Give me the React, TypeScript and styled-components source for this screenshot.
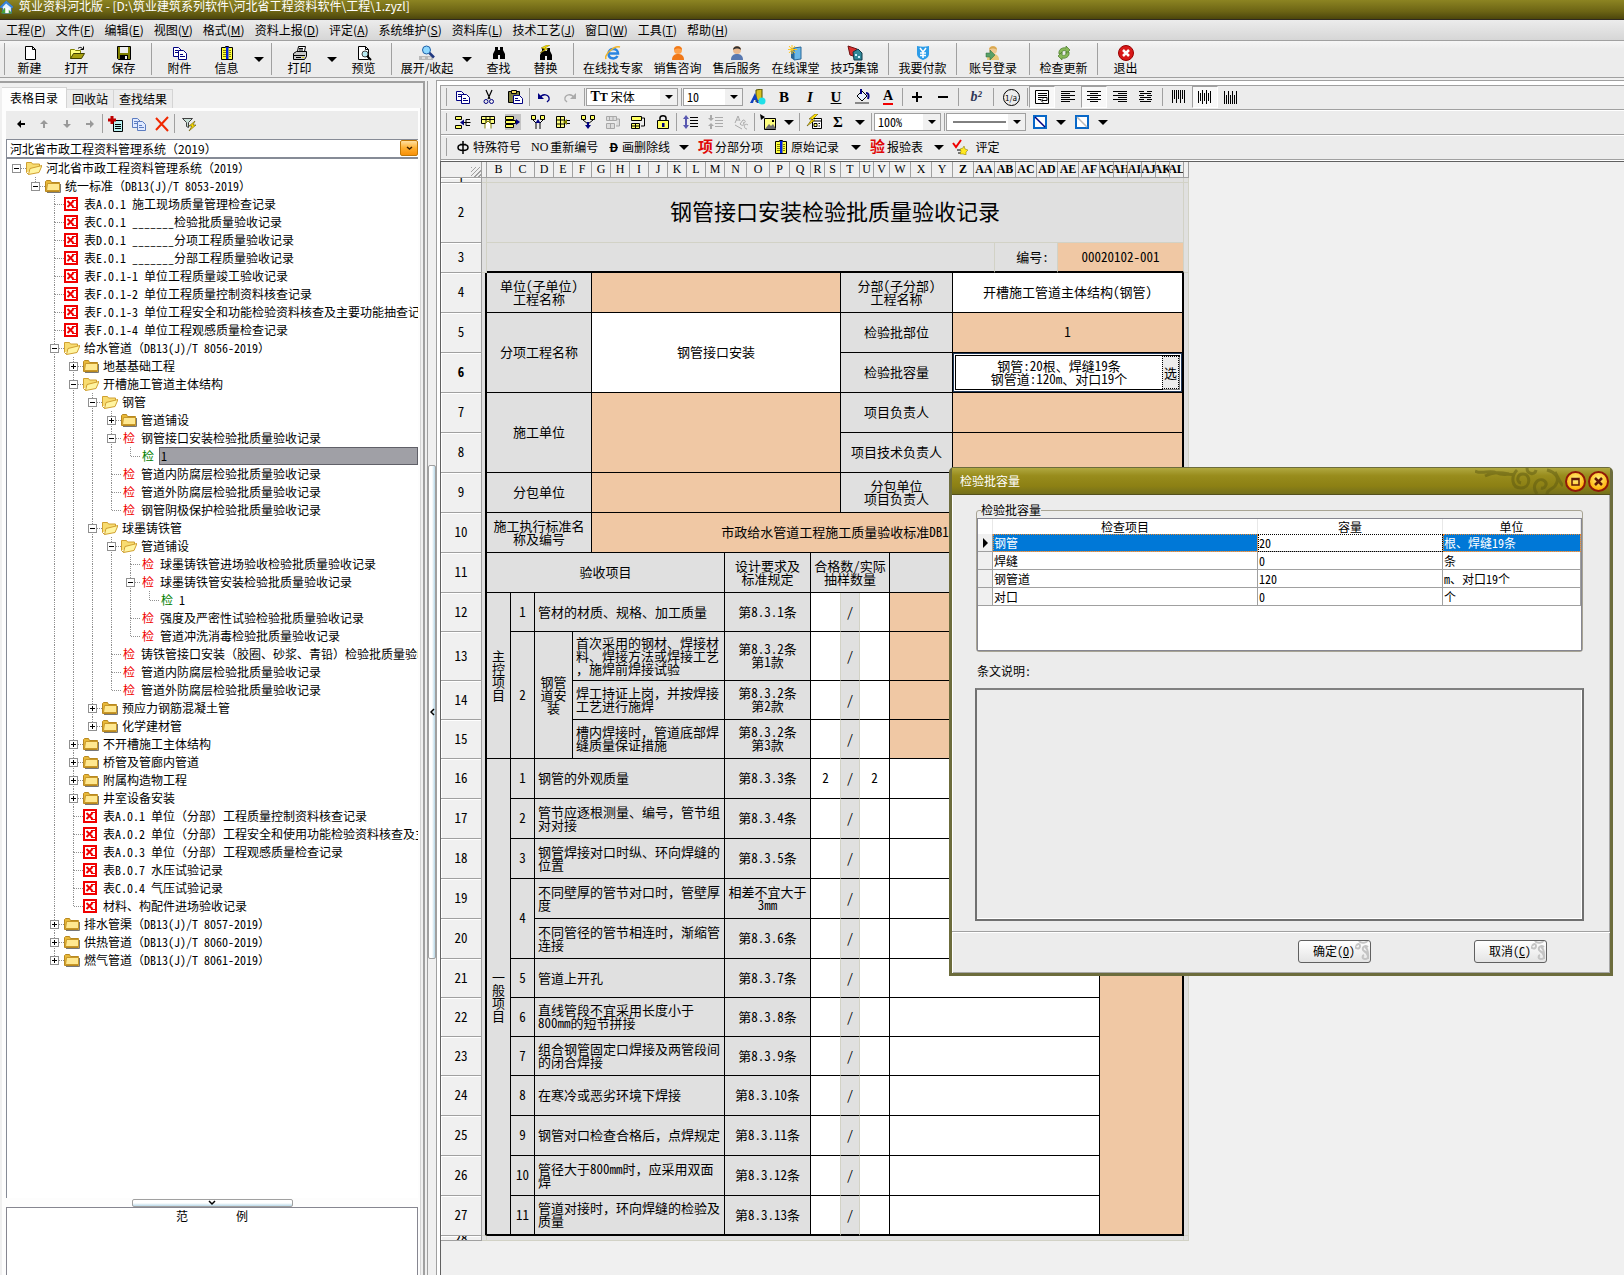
import React from "react";
import styled, { createGlobalStyle, css } from "styled-components";

const GlobalStyle = createGlobalStyle`
  *, *::before, *::after { box-sizing: border-box; }
  html, body { margin: 0; padding: 0; }
  body {
    background: #f0f0f0;
    color: #000;
    font: 12px/18px "Noto Sans CJK SC", sans-serif;
    text-spacing-trim: space-all;
    overflow: hidden;
  }
  button, select, input, textarea { font: inherit; color: inherit; margin: 0; }
  ul { margin: 0; padding: 0; list-style: none; }
`;

/* Latin runs take half-width glyphs, Chinese punctuation stays full width. */
const Half = styled.span`
  font-feature-settings: "hwid";
`;
const mix = (node: React.ReactNode): React.ReactNode =>
  typeof node === "string"
    ? node.split(/([ -~]+)/).map((part, i) => (i % 2 ? <Half key={i}>{part}</Half> : part))
    : node;

/* ---------- icons ---------- */

const docs = (c: string, fill = "#fff") => (
  <>
    <path d="M1.5 2.5h5l3 3v6h-8z" fill={fill} stroke={c} />
    <path d="M3 5.5h3M3 7.5h4" stroke={c} />
    <path d="M6.5 5.5h5l3 3v6h-8z" fill={fill} stroke={c} />
    <path d="M8 9.5h3M8 11.5h5" stroke={c} />
  </>
);
const bars = (ls: [number, number][]) => (
  <path d={ls.map(([a, b], i) => `M${a} ${2.5 + i * 2}H${b}`).join("")} stroke="#000" />
);
const vbars = (ls: [number, number][]) => (
  <path d={ls.map(([a, b], i) => `M${1.5 + i * 2} ${a}V${b}`).join("")} stroke="#000" />
);
const binoculars = (y: number) => (
  <path transform={`translate(0 ${y})`} d="M4 2h3v3h2V2h3v3l2 4v5H9v-4H7v4H2V9l2-4z" fill="#000" />
);
const person = (body: string, head: string, hair: string) => (
  <>
    <path d="M2 15c0-5 3-6 6-6s6 1 6 6z" fill={body} />
    <circle cx="8" cy="5" r="4" fill={head} />
    <path d="M4 5c0-5 8-5 8 0-2-2-6-2-8 0z" fill={hair} />
  </>
);

const ICONS: Record<string, React.ReactNode> = {
  app: (
    <>
      <path d="M0 8L7 1l8 7-2 1v6H3V9z" fill="#e8f4ff" stroke="#2a6ab8" />
      <path d="M0 8L7 1l8 7-2 1-6-5-5 5z" fill="#3a86d8" />
      <path d="M1 15l4-6 5 2 4 4z" fill="#47a23c" />
      <path d="M6 9h4v6H6z" fill="#fff" />
    </>
  ),
  new: <path d="M3.5 1.5h7l3 3v10h-10zM10.5 1.5v3h3" fill="#fff" stroke="#000" />,
  open: (
    <>
      <path d="M1.5 13.5v-9h4l1 1h5v3" fill="#ffff80" stroke="#808000" />
      <path d="M1.5 13.5l3-5h11l-3 5z" fill="#a8a010" stroke="#404000" />
      <path d="M9 3.5c2-2 4-1 5 1M14.5 1.5v3h-3" fill="none" stroke="#000" />
    </>
  ),
  save: (
    <>
      <path d="M1.5 1.5h13v13h-12l-1-1z" fill="#808000" stroke="#000" />
      <path d="M4 2h8v6H4z" fill="#eee" />
      <path d="M4 10h8v4H4z" fill="#000" />
      <path d="M9 11h2v3H9z" fill="#eee" />
    </>
  ),
  docs: docs("#000080"),
  docsPale: docs("#5c7cc0", "#dfe9ff"),
  info: (
    <>
      <path d="M2.5 2.5h4v-1h3v1h4v12h-11z" fill="#ffff40" stroke="#000" />
      <path d="M4 5.5h3M4 7.5h3M4 9.5h3M4 11.5h3M10 5.5h2M10 7.5h2M10 9.5h2M10 11.5h2" stroke="#808000" />
      <path d="M7 2h2.5v12H7z" fill="#0020e0" />
    </>
  ),
  print: (
    <>
      <path d="M5.5 6.5l1-5h7l-1 5z" fill="#fff" stroke="#000" />
      <path d="M1.5 8.5l3-2h10v5l-2 3h-11z" fill="#c8c8c8" stroke="#000" />
      <path d="M2 10.5h11M7 3.5h4M7 5h4M4 12.5h5" stroke="#000" />
      <path d="M10 12h2v1h-2z" fill="#e0d000" />
    </>
  ),
  preview: (
    <>
      <path d="M2.5 1.5h7l3 3v10h-10zM9.5 1.5v3h3" fill="#fff" stroke="#000" />
      <circle cx="9" cy="9" r="3" fill="#b8ecf4" stroke="#404040" />
      <path d="M11 11l4 4" stroke="#000" strokeWidth="2" />
    </>
  ),
  expand: (
    <>
      <path d="M0 11h14v4H0z" fill="#b8b8b8" />
      <path d="M3 13h3M9 13h3" stroke="#fff" />
      <circle cx="7.5" cy="5" r="4" fill="#8ed8ff" stroke="#2060a8" />
      <path d="M10.500 8l4.500 4.500" stroke="#203880" strokeWidth="2.500" />
    </>
  ),
  find: binoculars(0),
  replace: (
    <>
      {binoculars(1)}
      <path d="M9 0L3 3l4 1-5 4 8-4-3-1 5-3z" fill="#ffe800" stroke="#807000" strokeWidth=".5" />
    </>
  ),
  ie: (
    <>
      <path d="M3.5 8.5H13c0-6-9.500-6-9.500 0s7 6 9 2.500" fill="none" stroke="#2a84e0" strokeWidth="2.500" />
      <path d="M1 14c-2-4 8-14 14-12" fill="none" stroke="#f0b428" strokeWidth="1.500" />
    </>
  ),
  sales: person("#f07818", "#ffa048", "#f07818"),
  service: person("#5878b0", "#e8b890", "#303030"),
  classroom: (
    <>
      <path d="M6 3l7-1v12l-7 1z" fill="#6ab8e8" stroke="#2a6898" />
      <path d="M3 3l3 0v12l-3-2z" fill="#2a6898" />
      <path d="M4 0v9M0 4.500h9M1 1l6 7M7 1L1 8" stroke="#ffc820" />
    </>
  ),
  tips: (
    <>
      <path d="M1 1l9 3 2 9-9-3z" fill="#d83030" stroke="#701010" />
      <path d="M6 7l5-3 4 4v7H7z" fill="#308898" stroke="#103848" />
      <path d="M8 9h2v2H8zM11 11h2v2h-2z" fill="#c8f0ff" />
    </>
  ),
  pay: (
    <>
      <path d="M2 1c4 1 8 1 12 0v8c0 3-3 5-6 6-3-1-6-3-6-6z" fill="#2c9ce8" />
      <path d="M5 3l3 4 3-4M8 7v6M5 8h6M5 10.500h6" fill="none" stroke="#fff" strokeWidth="1.500" />
    </>
  ),
  login: (
    <>
      {person("#e8c878", "#f0c890", "#d8a850")}
      <path d="M1 8h4V5l5 5-5 5v-3H1z" fill="#58a068" stroke="#286838" strokeWidth=".5" />
    </>
  ),
  update: (
    <>
      <path d="M3 9c-1-5 4-7 7-6V1l4 4-4 4V6C8 5 5 6 6 9z" fill="#88b858" stroke="#487828" strokeWidth=".7" />
      <path d="M13 7c1 5-4 7-7 6v2l-4-4 4-4v3c2 1 5 0 4-3z" fill="#88b858" stroke="#487828" strokeWidth=".7" />
    </>
  ),
  exit: (
    <>
      <circle cx="8" cy="8" r="7.500" fill="#d81818" stroke="#900" />
      <path d="M5 5l6 6M11 5l-6 6" stroke="#fff" strokeWidth="2.500" />
    </>
  ),
  left: <path d="M4 8l4-4v3h4v2H8v3z" fill="#000" />,
  up: <path d="M8 4l4 4H9v4H7V8H4z" fill="#999" />,
  down: <path d="M8 12l4-4H9V4H7v4H4z" fill="#999" />,
  right: <path d="M12 8L8 4v3H4v2h4v3z" fill="#999" />,
  add: (
    <>
      <path d="M5.500 4.500h9v11h-9z" fill="#b8f0f0" stroke="#000" />
      <path d="M7 8.500h6M7 10.500h6M7 12.500h6" stroke="#000" />
      <path d="M0 4h8M4 0v8" stroke="#c00000" strokeWidth="3" />
    </>
  ),
  remove: <path d="M2 2l12 13M14 1L2 14" stroke="#f02800" strokeWidth="2" />,
  filter: (
    <>
      <path d="M1.500 2.500h10l-4 4v5l-2-1v-4z" fill="#c8e0d8" stroke="#404040" />
      <path d="M14 5l-6 5h3l-3 5 7-6h-3z" fill="#ffe000" stroke="#605000" strokeWidth=".6" />
    </>
  ),
  cut: (
    <>
      <path d="M5 1l4 9M11 1L7 10" stroke="#000" strokeWidth="1.200" />
      <circle cx="5" cy="12.500" r="2" fill="none" stroke="#000080" />
      <circle cx="10.500" cy="12.500" r="2" fill="none" stroke="#000080" />
    </>
  ),
  paste: (
    <>
      <path d="M1.500 2.500h11v11h-11z" fill="#808040" stroke="#000" />
      <path d="M4.500 1.500h5v3h-5z" fill="#ffe060" stroke="#000" />
      <path d="M6.500 6.500h6l3 3v5h-9z" fill="#fff" stroke="#000080" />
      <path d="M8 9.500h3M8 11.500h5" stroke="#000080" />
    </>
  ),
  undo: (
    <>
      <path d="M4 9c2-5 10-4 9 2l-2 2" fill="none" stroke="#000080" strokeWidth="1.300" />
      <path d="M2 4v6h6z" fill="#000080" />
    </>
  ),
  redo: (
    <>
      <path d="M12 9C10 4 2 5 3 11l2 2" fill="none" stroke="#aaa" strokeWidth="1.300" />
      <path d="M14 4v6H8z" fill="#aaa" />
    </>
  ),
  format: (
    <>
      <path d="M6 1l6-1v10l-6 3z" fill="#d8c020" stroke="#505000" />
      <path d="M0 14L5 4l4 10H7l-1-3H4l-1 3z" fill="#1040c0" />
      <circle cx="12" cy="12" r="3.500" fill="#20e0e8" />
    </>
  ),
  bucket: (
    <>
      <path d="M3 7l5-5 5 5-5 5z" fill="#e8f0ff" stroke="#000" />
      <path d="M7 0v5M12 4c3 0 3 3 2 6" fill="none" stroke="#000080" strokeWidth="2" />
      <path d="M1 13h14v2H1z" fill="#888" />
    </>
  ),
  plus: <path d="M3 8h10M8 3v10" stroke="#000" strokeWidth="2" />,
  minus: <path d="M3 8h10" stroke="#000" strokeWidth="2" />,
  wrap: (
    <>
      <path d="M1.500 1.500h13v13h-13z" fill="#fff" stroke="#000" />
      <path d="M4 4.500h9M4 6.500h9M4 8.500h9v3H8M4 10.500h3M9 9.500l-2 2 2 2" fill="none" stroke="#000" />
    </>
  ),
  alignLeft: bars([[1, 15], [1, 10], [1, 15], [1, 10], [1, 15], [1, 10]]),
  alignCenter: bars([[1, 15], [4, 12], [1, 15], [4, 12], [1, 15], [4, 12]]),
  alignRight: bars([[1, 15], [6, 15], [1, 15], [6, 15], [1, 15], [6, 15]]),
  alignFill: <path d="M1 2.500h5M9 2.500h5M2 4.500h11M1 6.500h5M9 6.500h5M2 8.500h11M1 10.500h5M9 10.500h5M2 12.500h11" stroke="#000" />,
  vTop: vbars([[1, 14], [1, 10], [1, 14], [1, 10], [1, 14], [1, 10], [1, 14]]),
  vMid: vbars([[2, 14], [4, 12], [1, 15], [4, 12], [1, 15], [4, 12], [2, 14]]),
  vBottom: vbars([[2, 15], [6, 15], [2, 15], [6, 15], [2, 15], [6, 15], [2, 15]]),
  insRow: (
    <>
      <path d="M.5 2.500h6v3h-6zM.5 11.500h6v3h-6z" fill="#ffff60" stroke="#000" />
      <path d="M8 8.500h7.500M15 5.500h-4v6h4" stroke="#000" />
      <path d="M5 8.500l4-3v6z" fill="#000080" />
    </>
  ),
  insCol: (
    <>
      <path d="M1.500 2.500h13v7h-13zM1.500 5.500h13M6 2.500v7M10 2.500v7" fill="#ffff80" stroke="#000" />
      <path d="M5 14.500V10l3-3 3 3v4.500" fill="#fff" stroke="#808000" />
    </>
  ),
  moveRow: (
    <>
      <path d="M0 0h16v16H0z" fill="#c4c4c4" />
      <path d="M.5 2.500h8v3h-8zM.5 10.500h8v3h-8zM.5 6.500h10v3H.5z" fill="#ffff60" stroke="#000" />
      <path d="M15 8l-4-3v6z" fill="#000080" />
    </>
  ),
  splitUp: (
    <>
      <path d="M1.500 1.500h4v4h-4zM10.500 1.500h4v4h-4z" fill="#ffff60" stroke="#000" />
      <path d="M6 15V9L3 6M10 15V9l3-3" fill="none" stroke="#000" />
      <path d="M8 5l2.500 4h-5z" fill="#000080" />
    </>
  ),
  colArrow: (
    <>
      <path d="M1.500 2.500h8v11h-8zM1.500 6h8M1.500 10h8M5.500 2.500v11" fill="#ffff80" stroke="#000" />
      <path d="M15 6.500h-4M15 9.500h-4" stroke="#000" />
      <path d="M8 8l4-3v6z" fill="#808000" />
    </>
  ),
  splitDown: (
    <>
      <path d="M1.500 1.500h4v4h-4zM10.500 1.500h4v4h-4z" fill="#ffff60" stroke="#000" />
      <path d="M3 6l5 4 5-4" fill="none" stroke="#000" />
      <path d="M8 15l-3-4h2V8h2v3h2z" fill="#000080" />
    </>
  ),
  mergeOff: <path d="M1.500 2.500h10v4h-10zM1.500 9.500h8v5h-8zM4.500 2.500v4M8 2.500v4M5.500 9.500v5M12 5h2.500v7H11" fill="#ddd" stroke="#a8a8a8" />,
  merge: (
    <>
      <path d="M1.500 2.500h10v4h-10zM1.500 9.500h8v5h-8zM5.500 9.500v5M1.500 12h8" fill="#ffff60" stroke="#000" />
      <path d="M12 4h2.500v8H11" fill="none" stroke="#000" />
    </>
  ),
  lock: (
    <>
      <path d="M5 7V4c0-3 6-3 6 0v3" fill="none" stroke="#000" strokeWidth="1.500" />
      <path d="M2.500 6.500h11v8h-11z" fill="#ffff60" stroke="#000" />
      <path d="M7 9h2.500v4H7z" fill="#000080" />
    </>
  ),
  spacing: (
    <>
      <path d="M7 3.500h8M7 6.500h8M7 9.500h8M7 12.500h8" stroke="#000" />
      <path d="M3 1l3 4H4v6h2l-3 4-3-4h2V5H0z" fill="#5858b0" />
    </>
  ),
  spacingOff: (
    <>
      <path d="M7 3.500h8M7 6.500h8M7 9.500h8M7 12.500h8" stroke="#aaa" />
      <path d="M3 7L0 4h2V1h2v3h2zM3 9l3 3H4v3H2v-3H0z" fill="#aaa" />
    </>
  ),
  abcOff: <path d="M2 9l3-7 2 5M3 6h3M7 10l3-4c3 0 3 3 0 3 3 1 0 4-3 1M15 11c-4-3-5 4-1 4M2 11l7 4" fill="none" stroke="#aaa" />,
  image: (
    <>
      <path d="M4.500 4.500h11v11h-11z" fill="#ffff80" stroke="#000" />
      <path d="M5 15l4-5 2 2 2-2 3 5z" fill="#707070" />
      <path d="M12 6h2v2h-2z" fill="#000" />
      <path d="M0 0l5 3-4 3z" fill="#000" />
    </>
  ),
  calc: (
    <>
      <path d="M6.500 4.500h9v10h-9z" fill="#fff" stroke="#000" />
      <path d="M6.500 7h9M8 9.500h3v3H8zM12.500 9.500h1.500M12.500 12h1.500" stroke="#000" fill="#ffff60" />
      <path d="M9 0L3 5h3l-5 7 8-6H6l6-6z" fill="#ffe000" stroke="#605000" strokeWidth=".6" />
    </>
  ),
  boxSlash: (
    <>
      <path d="M2 2h12v12H2z" fill="#fff" stroke="#0868c8" strokeWidth="2" />
      <path d="M3 3l10 10" stroke="#000080" strokeWidth="1.500" />
    </>
  ),
  boxSlashPale: (
    <>
      <path d="M2 2h12v12H2z" fill="#fff" stroke="#0868c8" strokeWidth="2" />
      <path d="M3 3l10 10" stroke="#bbb" strokeWidth="1.500" />
    </>
  ),
  phi: <path d="M8 2v13M5 5.500h6M3 8.500c0-4 10-4 10 0s-10 4-10 0" fill="none" stroke="#000" strokeWidth="1.500" />,
  check: (
    <>
      <path d="M1 4l3 4 5-7" fill="none" stroke="#f00000" strokeWidth="2" />
      <path d="M5 11h4M6 14h4" stroke="#000" />
      <path d="M12 7l1 3 3 1-2 2 0 3-3-1-3 0 1-3-1-2 3-1z" fill="#ffe820" stroke="#807000" strokeWidth=".5" />
    </>
  ),
  folder: (
    <>
      <path d="M.500 13.500v-10l1-1h4l1 2h8v9z" fill="#e8b838" stroke="#b88820" />
      <path d="M1.500 12.500l1-7h12v7z" fill="#ffe890" stroke="#c89828" />
      <path d="M2 14.500h13.500V6" stroke="#777" />
    </>
  ),
  folderOpen: (
    <>
      <path d="M.500 12.500v-10h5l1 1.500h7v3" fill="#f8dc70" stroke="#d0a030" />
      <path d="M2.500 14.500L4 8.500l12-3-3 7z" fill="#fff4a0" stroke="#d0a030" />
      <path d="M.500 12.500l2 2" stroke="#d0a030" />
    </>
  ),
  form: (
    <>
      <path d="M0 1h14v14H0z" fill="#fff" />
      <path d="M1 2h12v12H1z" fill="none" stroke="#f00000" strokeWidth="2" />
      <path d="M3.500 5l6 6M9.500 5l-6 6" stroke="#f00000" strokeWidth="2" />
      <path d="M8 4.500h4M8 11.500h4" stroke="#f00000" />
    </>
  ),
};

const Glyph = styled.svg<{ $s?: number }>`
  display: block;
  flex: none;
  width: ${(p) => p.$s ?? 16}px;
  height: ${(p) => p.$s ?? 16}px;
`;
const Icon = ({ name, size }: { name: string; size?: number }) => (
  <Glyph viewBox="0 0 16 16" $s={size} fill="none" aria-hidden="true">
    {ICONS[name]}
  </Glyph>
);

/* ---------- frame ---------- */

const Shell = styled.div`
  display: flex;
  flex-direction: column;
  min-height: 100vh;
`;
const TitleBar = styled.header`
  display: flex;
  gap: 5px;
  height: 20px;
  line-height: 12px;
  color: #fff;
  background: linear-gradient(#8c8422, #6c6414 60%, #4c460c);
  border-bottom: 1px solid #302a20;
`;
const TitleText = styled.h1`
  margin: 0;
  font-size: 12px;
  line-height: 12px;
  font-weight: 400;
`;
const MenuBar = styled.nav`
  display: flex;
  height: 20px;
  padding-left: 1px;
  background: linear-gradient(#ececec, #d6d6d6);
`;
const MenuItem = styled.button`
  padding: 0 5px;
  border: 0;
  background: none;
  line-height: 18px;
  white-space: nowrap;
`;
const MainBar = styled.div`
  display: flex;
  height: 38px;
  padding-left: 3px;
  background: linear-gradient(#f6f6f6, #ececec 8px);
  border: solid #a0a0a0;
  border-width: 1px 0;
`;
const MainButton = styled.button<{ $w: number }>`
  display: flex;
  flex-direction: column;
  align-items: center;
  flex: none;
  width: ${(p) => p.$w}px;
  padding: 4px 0 0;
  border: 0;
  background: none;
  line-height: 14px;
  white-space: nowrap;
`;
const Rule = styled.span<{ $gap?: number }>`
  flex: none;
  align-self: stretch;
  width: 1px;
  margin: 2px ${(p) => p.$gap ?? 1}px;
  background: #a0a0a0;
`;
const Drop = styled.button<{ $w?: number }>`
  display: flex;
  align-items: center;
  justify-content: center;
  flex: none;
  width: ${(p) => p.$w ?? 18}px;
  padding: 0;
  border: 0;
  background: none;
  &::before {
    content: "";
    border: solid transparent;
    border-width: 5px 5px 0;
    border-top-color: #000;
  }
`;
const Workspace = styled.main`
  display: flex;
  flex: 1;
  padding-top: 2px;
`;

/* ---------- left panel ---------- */

const LeftPanel = styled.aside`
  display: flex;
  flex-direction: column;
  flex: none;
  width: 425px;
  margin-top: 1px;
  padding: 4px 2px 0;
  border: solid #a0a0a0;
  border-width: 2px 2px 0 0;
`;
const Tabs = styled.div`
  display: flex;
  align-items: flex-end;
  height: 21px;
`;
const Tab = styled.button<{ $on?: boolean }>`
  height: ${(p) => (p.$on ? 21 : 19)}px;
  padding: 0 ${(p) => (p.$on ? 8 : 5)}px;
  border: solid #d4d4d4;
  border-width: 1px 1px 0 0;
  background: ${(p) => (p.$on ? "#fdfdfd" : "#ececec")};
  line-height: 18px;
`;
const Page = styled.section`
  display: flex;
  flex-direction: column;
  flex: 1;
  padding: 3px 2px 0 4px;
  background: #fdfdfd;
  border-right: 1px solid #d4d4d4;
`;
const TreeBar = styled.div`
  display: flex;
  align-items: center;
  height: 28px;
  padding: 1px 0 4px 3px;
  background: #ececec;
`;
const Tool = styled.button<{ $w?: number; $on?: boolean }>`
  display: flex;
  align-items: center;
  justify-content: center;
  flex: none;
  align-self: stretch;
  width: ${(p) => p.$w ?? 26}px;
  padding: 0;
  border: 1px solid transparent;
  background: none;
  ${(p) =>
    p.$on &&
    css`
      background: #f8f8f8;
      border-color: #a0a0a0 #fff #fff #a0a0a0;
    `}
`;
const TreeSelect = styled.div`
  position: relative;
  height: 19px;
  border: 1px solid #868b96;
  border-right: 0;
  background: #fff;
`;
const PlainSelect = styled.select<{ $half?: boolean }>`
  appearance: none;
  display: block;
  width: 100%;
  height: 100%;
  padding: 0 0 0 3px;
  border: 0;
  background: none;
  font-feature-settings: ${(p) => (p.$half ? '"hwid"' : "normal")};
  line-height: 16px;
`;
const OrangeArrow = styled.span`
  position: absolute;
  top: 0;
  right: 0;
  display: flex;
  align-items: center;
  justify-content: center;
  width: 18px;
  height: 16px;
  border: 1px solid #c07808;
  border-radius: 2px;
  background: linear-gradient(#ffe0a0, #ffb030 50%, #f89008);
  pointer-events: none;
`;
const Tree = styled.ul`
  flex: 1;
  border: solid #868b96;
  border-width: 1px 0 0 1px;
  background: #fff;
  overflow: hidden;
`;
const Node = styled.li`
  display: flex;
  height: 18px;
  white-space: pre;
`;
const vDots = "repeating-linear-gradient(to bottom, #909090 0 1px, transparent 1px 2px)";
const hDots = "repeating-linear-gradient(to right, #909090 0 1px, transparent 1px 2px)";
const Guide = styled.span<{ $up?: boolean; $down?: boolean; $side?: boolean }>`
  display: flex;
  align-items: center;
  flex: none;
  width: 19px;
  padding-left: 5px;
  background:
    ${vDots} 9px 0 / 1px ${(p) => (p.$up ? "50%" : "0")} no-repeat,
    ${vDots} 9px 100% / 1px ${(p) => (p.$down ? "50%" : "0")} no-repeat,
    ${hDots} 10px 9px / ${(p) => (p.$side ? "9px" : "0")} 1px no-repeat;
`;
const Toggle = styled.button<{ $open: boolean }>`
  width: 9px;
  height: 9px;
  padding: 0;
  border: 1px solid #909090;
  background:
    linear-gradient(#000, #000) 1px 3px / 5px 1px no-repeat,
    linear-gradient(#000, #000) 3px 1px / 1px ${(p) => (p.$open ? 0 : 5)}px no-repeat,
    #fff;
`;
const NodeIcon = styled.span<{ $c?: string }>`
  display: flex;
  align-items: center;
  flex: none;
  width: 19px;
  padding-left: ${(p) => (p.$c ? 2 : 0)}px;
  color: ${(p) => p.$c ?? "inherit"};
`;
const NodeText = styled.span<{ $on?: boolean }>`
  flex: 1;
  padding-left: 1px;
  line-height: ${(p) => (p.$on ? 16 : 18)}px;
  border: ${(p) => (p.$on ? "1px solid #606068" : "0")};
  background: ${(p) => (p.$on ? "#a0a0a6" : "none")};
  overflow: hidden;
`;

type TreeRow = [level: number, kind: "o" | "c" | "f" | "r" | "R" | "g" | "G", text: string];
// o/c: open or closed folder, f: form, r: record, R: expanded record, g: sample, G: selected sample
const TREE: TreeRow[] = [
  [0, "o", "河北省市政工程资料管理系统（2019）"],
  [1, "o", "统一标准（DB13(J)/T 8053-2019）"],
  [2, "f", "表A.0.1 施工现场质量管理检查记录"],
  [2, "f", "表C.0.1 _______检验批质量验收记录"],
  [2, "f", "表D.0.1 _______分项工程质量验收记录"],
  [2, "f", "表E.0.1 _______分部工程质量验收记录"],
  [2, "f", "表F.0.1-1 单位工程质量竣工验收记录"],
  [2, "f", "表F.0.1-2 单位工程质量控制资料核查记录"],
  [2, "f", "表F.0.1-3 单位工程安全和功能检验资料核查及主要功能抽查记录"],
  [2, "f", "表F.0.1-4 单位工程观感质量检查记录"],
  [2, "o", "给水管道（DB13(J)/T 8056-2019）"],
  [3, "c", "地基基础工程"],
  [3, "o", "开槽施工管道主体结构"],
  [4, "o", "钢管"],
  [5, "c", "管道铺设"],
  [5, "R", "钢管接口安装检验批质量验收记录"],
  [6, "G", "1"],
  [5, "r", "管道内防腐层检验批质量验收记录"],
  [5, "r", "管道外防腐层检验批质量验收记录"],
  [5, "r", "钢管阴极保护检验批质量验收记录"],
  [4, "o", "球墨铸铁管"],
  [5, "o", "管道铺设"],
  [6, "r", "球墨铸铁管进场验收检验批质量验收记录"],
  [6, "R", "球墨铸铁管安装检验批质量验收记录"],
  [7, "g", "1"],
  [6, "r", "强度及严密性试验检验批质量验收记录"],
  [6, "r", "管道冲洗消毒检验批质量验收记录"],
  [5, "r", "铸铁管接口安装（胶圈、砂浆、青铅）检验批质量验收记录"],
  [5, "r", "管道内防腐层检验批质量验收记录"],
  [5, "r", "管道外防腐层检验批质量验收记录"],
  [4, "c", "预应力钢筋混凝土管"],
  [4, "c", "化学建材管"],
  [3, "c", "不开槽施工主体结构"],
  [3, "c", "桥管及管廊内管道"],
  [3, "c", "附属构造物工程"],
  [3, "c", "井室设备安装"],
  [3, "f", "表A.0.1 单位（分部）工程质量控制资料核查记录"],
  [3, "f", "表A.0.2 单位（分部）工程安全和使用功能检验资料核查及主要功能抽查记录"],
  [3, "f", "表A.0.3 单位（分部）工程观感质量检查记录"],
  [3, "f", "表B.0.7 水压试验记录"],
  [3, "f", "表C.0.4 气压试验记录"],
  [3, "f", "材料、构配件进场验收记录"],
  [2, "c", "排水管渠（DB13(J)/T 8057-2019）"],
  [2, "c", "供热管道（DB13(J)/T 8060-2019）"],
  [2, "c", "燃气管道（DB13(J)/T 8061-2019）"],
];
const hasNext = (i: number, level: number) => {
  for (let j = i + 1; j < TREE.length; j++) {
    if (TREE[j][0] < level) return false;
    if (TREE[j][0] === level) return true;
  }
  return false;
};

const TreeNode = ({ i }: { i: number }) => {
  const [level, kind, text] = TREE[i];
  const foldable = "ocR".includes(kind);
  const cells = [];
  for (let k = 0; k < level; k++) {
    const on = k > 0 && hasNext(i, k);
    cells.push(<Guide key={k} $up={on} $down={on} />);
  }
  const mark = "rR".includes(kind) ? "#f00000" : "gG".includes(kind) ? "#008000" : undefined;
  return (
    <Node role="treeitem">
      {cells}
      <Guide $side $up={level > 0} $down={level > 0 && hasNext(i, level)}>
        {foldable && <Toggle $open={kind !== "c"} aria-label={text} />}
      </Guide>
      <NodeIcon $c={mark}>
        {mark ? "检" : <Icon name={kind === "f" ? "form" : kind === "c" || level === 1 ? "folder" : "folderOpen"} />}
      </NodeIcon>
      <NodeText $on={kind === "G"}>{mix(text)}</NodeText>
    </Node>
  );
};

const HandleRow = styled.div`
  display: flex;
  justify-content: center;
  height: 9px;
  padding-top: 1px;
`;
const Handle = styled.button<{ $vertical?: boolean }>`
  display: flex;
  align-items: center;
  justify-content: center;
  width: ${(p) => (p.$vertical ? "100%" : "161px")};
  height: ${(p) => (p.$vertical ? "494px" : "8px")};
  padding: 0;
  border: 1px solid #a0a0a0;
  border-radius: 2px;
  background: linear-gradient(${(p) => (p.$vertical ? "to right" : "to bottom")}, #fff 50%, #b8d8e8);
`;
const Example = styled.div`
  height: 68px;
  border: 1px solid #868690;
  border-bottom: 0;
  background: #fff;
  line-height: 16px;
  text-align: center;
`;
const Splitter = styled.div`
  display: flex;
  align-items: center;
  flex: none;
  width: 9px;
  margin: 1px 0 0 2px;
  padding-top: 147px;
  padding-bottom: 79px;
  border-left: 1px solid #a0a0a0;
`;

/* ---------- editor ---------- */

const Editor = styled.section`
  display: flex;
  flex-direction: column;
  flex: 1;
  min-width: 0;
  padding: 4px 0 0 3px;
  background: #fff;
  border: solid #a0a0a0;
  border-width: 1px 0 0 1px;
`;
const Bars = styled.div`
  border: solid #a0a0a0;
  border-width: 1px 0 0 1px;
  background: #fff;
`;
const Bar = styled.div`
  display: flex;
  align-items: stretch;
  height: 24px;
  margin-bottom: 1px;
  padding: 0 0 1px 4px;
  background: #ececec;
  border-bottom: 1px solid #a0a0a0;
`;
const Grip = styled.span`
  flex: none;
  width: 1px;
  margin: 2px 3px 2px 1px;
  background: #a0a0a0;
`;
const Combo = styled.div<{ $w: number }>`
  position: relative;
  display: flex;
  align-items: center;
  flex: none;
  align-self: center;
  width: ${(p) => p.$w}px;
  height: 18px;
  margin-right: 2px;
  border: 1px solid #a0a0a0;
  background: #fff;
`;
const ComboArrow = styled.span`
  position: absolute;
  top: 0;
  right: 0;
  display: flex;
  align-items: center;
  justify-content: center;
  width: 17px;
  height: 16px;
  background: #f0f0f0;
  pointer-events: none;
  &::before {
    content: "";
    border: solid transparent;
    border-width: 4px 4px 0;
    border-top-color: #000;
  }
`;
const Sign = styled.span<{ $size?: number; $bold?: boolean; $italic?: boolean; $under?: string; $c?: string }>`
  font-family: "Liberation Serif", "Noto Sans CJK SC", serif;
  font-size: ${(p) => p.$size ?? 14}px;
  line-height: 14px;
  font-weight: ${(p) => (p.$bold ? 700 : 400)};
  font-style: ${(p) => (p.$italic ? "italic" : "normal")};
  color: ${(p) => p.$c ?? "#000"};
  border-bottom: ${(p) => (p.$under ? `2px solid ${p.$under}` : "0")};
`;
const Ring = styled.span`
  width: 17px;
  height: 17px;
  border: 1px solid #000;
  border-radius: 50%;
  font-size: 8px;
  line-height: 15px;
`;
const TextTool = styled.button<{ $gap?: number }>`
  display: flex;
  align-items: center;
  flex: none;
  gap: 2px;
  margin-right: ${(p) => p.$gap ?? 8}px;
  padding: 0;
  border: 0;
  background: none;
  line-height: 20px;
  white-space: pre;
`;
const Strike = styled.s`
  padding: 0 2px;
  font-weight: 700;
`;

/* ---------- sheet ---------- */

const SheetArea = styled.div`
  flex: 1;
  border: solid #606060;
  border-width: 1px 0 0 1px;
  background: #f0f0f0;
`;
const Sheet = styled.table`
  table-layout: fixed;
  width: 748px;
  border-collapse: separate;
  border-spacing: 0;
  font-size: 13px;
  line-height: 13px;
`;
const Row = styled.tr<{ $h: number }>`
  height: ${(p) => p.$h}px;
`;
const ColHead = styled.th<{ $bold?: boolean }>`
  padding: 0;
  border: solid #a0a0a0;
  border-width: 0 1px 1px 0;
  background: #f0f0f0;
  font-family: "Liberation Serif", serif;
  font-size: 12px;
  font-weight: ${(p) => (p.$bold ? 700 : 400)};
`;
const Letter = styled.div`
  display: flex;
  justify-content: center;
  overflow: hidden;
`;
const RowHead = styled.th<{ $bold?: boolean; $thin?: boolean }>`
  padding: 0 0 ${(p) => (p.$thin ? 0 : 2)}px;
  border: solid #a0a0a0;
  border-width: 0 1px 1px 0;
  background: #f0f0f0;
  box-shadow: inset 1px 1px #fff;
  font-feature-settings: "hwid";
  font-weight: ${(p) => (p.$bold ? 700 : 400)};
`;
const Sliver = styled.div`
  height: 4px;
  line-height: 4px;
  overflow: hidden;
`;
const Corner = styled(ColHead)`
  background:
    repeating-linear-gradient(135deg, #a0a0a0 0 1px, transparent 1px 3px) 100% 100% / 10px 10px no-repeat,
    #f0f0f0;
`;
const FILL = { gray: "#e0e0e0", peach: "#f0c8a4", white: "#fff" };
type CellStyle = {
  $f?: keyof typeof FILL;
  $left?: boolean;
  $line?: string;
  $right?: string;
  $heavy?: boolean;
  $last?: boolean;
  $flush?: boolean;
};
const CellBox = styled.td<CellStyle>`
  padding: 0 0 ${(p) => (p.$flush ? 0 : 2)}px ${(p) => (p.$left ? 3 : 0)}px;
  background: ${(p) => FILL[p.$f ?? "gray"]};
  text-align: ${(p) => (p.$left ? "left" : "center")};
  border-style: solid;
  border-color: transparent ${(p) => p.$right ?? "#000"} ${(p) => p.$line ?? "#000"} transparent;
  border-width: 0 ${(p) => (p.$last ? 2 : 1)}px ${(p) => (p.$heavy ? 2 : 1)}px 0;
  white-space: pre;
`;
const Cell = ({
  children,
  ...rest
}: CellStyle & { colSpan?: number; rowSpan?: number; children?: React.ReactNode }) => (
  <CellBox {...rest}>{mix(children)}</CellBox>
);
const Caption = styled.div`
  padding-bottom: 4px;
  font-size: 22px;
  line-height: 26px;
`;
const PALE = "#d2d2c6";
const Active = styled.div`
  display: flex;
  align-items: stretch;
  height: 39px;
  padding: 2px;
  border: 1px solid #203858;
  box-shadow: inset 0 0 0 1px #fff, inset 0 0 0 2px #000;
`;
const ActiveText = styled.span`
  flex: 1;
  align-self: center;
  padding-bottom: 2px;
`;
const PickButton = styled.button`
  width: 17px;
  padding: 0;
  border: 1px dotted #000;
  background: #ececec;
  box-shadow: 1px 1px #808080;
`;

const WIDTHS = [
  24, 24, 19, 19, 19, 19, 19, 19, 19, 19, 19, 19, 22, 23, 20, 21, 14, 16, 19, 14, 16, 21, 21, 21, 21, 21, 21, 21, 21,
  21, 21, 14, 14, 14, 14, 14, 14,
];
const LETTERS = "B C D E F G H I J K L M N O P Q R S T U V W X Y Z AA AB AC AD AE AF AG AH AI AJ AK AL".split(" ");

type Item = { n: number; h: number; no?: string; span?: number; text: string; rule: string; v?: string };
const MAIN: Item[] = [
  { n: 12, h: 39, no: "1", text: "管材的材质、规格、加工质量", rule: "第8.3.1条" },
  { n: 13, h: 49, no: "2", span: 3, text: "首次采用的钢材、焊接材\n料、焊接方法或焊接工艺\n，施焊前焊接试验", rule: "第8.3.2条\n第1款" },
  { n: 14, h: 39, text: "焊工持证上岗，并按焊接\n工艺进行施焊", rule: "第8.3.2条\n第2款" },
  { n: 15, h: 39, text: "槽内焊接时，管道底部焊\n缝质量保证措施", rule: "第8.3.2条\n第3款" },
];
const GENERAL: Item[] = [
  { n: 16, h: 40, no: "1", text: "钢管的外观质量", rule: "第8.3.3条", v: "2" },
  { n: 17, h: 40, no: "2", text: "管节应逐根测量、编号，管节组\n对对接", rule: "第8.3.4条" },
  { n: 18, h: 40, no: "3", text: "钢管焊接对口时纵、环向焊缝的\n位置", rule: "第8.3.5条" },
  { n: 19, h: 40, no: "4", span: 2, text: "不同壁厚的管节对口时，管壁厚\n度", rule: "相差不宜大于\n3mm" },
  { n: 20, h: 40, text: "不同管径的管节相连时，渐缩管\n连接", rule: "第8.3.6条" },
  { n: 21, h: 39, no: "5", text: "管道上开孔", rule: "第8.3.7条" },
  { n: 22, h: 39, no: "6", text: "直线管段不宜采用长度小于\n800mm的短节拼接", rule: "第8.3.8条" },
  { n: 23, h: 39, no: "7", text: "组合钢管固定口焊接及两管段间\n的闭合焊接", rule: "第8.3.9条" },
  { n: 24, h: 40, no: "8", text: "在寒冷或恶劣环境下焊接", rule: "第8.3.10条" },
  { n: 25, h: 40, no: "9", text: "钢管对口检查合格后，点焊规定", rule: "第8.3.11条" },
  { n: 26, h: 40, no: "10", text: "管径大于800mm时，应采用双面\n焊", rule: "第8.3.12条" },
  { n: 27, h: 40, no: "11", text: "管道对接时，环向焊缝的检验及\n质量", rule: "第8.3.13条" },
];

const ItemRow = ({ it, group, first, count }: { it: Item; group: "main" | "general"; first: boolean; count: number }) => {
  const main = group === "main";
  const nested = main && it.n > 12;
  const end = it.n === 27;
  return (
    <Row $h={it.h}>
      <RowHead scope="row">{it.n}</RowHead>
      {first && (
        <Cell rowSpan={count} $heavy={!main}>
          {main ? "主\n控\n项\n目" : "一\n般\n项\n目"}
        </Cell>
      )}
      {it.no && <Cell rowSpan={it.span} $heavy={end}>{it.no}</Cell>}
      {it.n === 13 && <Cell colSpan={2} rowSpan={3}>{"钢管\n道安\n装"}</Cell>}
      <Cell colSpan={nested ? 8 : 10} $left $heavy={end}>{it.text}</Cell>
      <Cell colSpan={4} $heavy={end}>{it.rule}</Cell>
      <Cell colSpan={2} $f="white" $right={PALE} $heavy={end}>{it.v}</Cell>
      <Cell $right={PALE} $heavy={end}>/</Cell>
      <Cell colSpan={2} $f="white" $heavy={end}>{it.v}</Cell>
      <Cell colSpan={10} $f={main ? "peach" : "white"} $heavy={end} />
      {first && <Cell colSpan={6} rowSpan={count} $f="peach" $heavy={!main} $last />}
    </Row>
  );
};

const EdgeRow = ({ label }: { label: string }) => (
  <Row $h={5}>
    <RowHead scope="row" $thin><Sliver>{label}</Sliver></RowHead>
    <Cell $right={PALE} $line={PALE} />
    <Cell colSpan={37} $right={PALE} $line={PALE} />
    <Cell $right={PALE} $line={PALE} />
  </Row>
);

const SheetGrid = () => (
  <Sheet>
    <colgroup>
      <col style={{ width: 41 }} />
      <col style={{ width: 5 }} />
      {WIDTHS.map((w, i) => (
        <col key={i} style={{ width: w }} />
      ))}
      <col style={{ width: 5 }} />
    </colgroup>
    <thead>
      <Row $h={16}>
        <Corner />
        <ColHead />
        {LETTERS.map((l, i) => (
          <ColHead key={l} scope="col" $bold={i >= 24}><Letter>{l}</Letter></ColHead>
        ))}
        <ColHead />
      </Row>
    </thead>
    <tbody>
      <EdgeRow label="1" />
      <Row $h={60}>
        <RowHead scope="row">2</RowHead>
        <Cell $right={PALE} rowSpan={2} $line={PALE} />
        <Cell colSpan={37} $right={PALE} $line={PALE}><Caption>钢管接口安装检验批质量验收记录</Caption></Cell>
        <Cell $right={PALE} $line={PALE} rowSpan={2} />
      </Row>
      <Row $h={30}>
        <RowHead scope="row">3</RowHead>
        <Cell colSpan={26} $right={PALE} $heavy />
        <Cell colSpan={3} $right={PALE} $heavy>{"  编号:"}</Cell>
        <Cell colSpan={8} $f="peach" $right={PALE} $heavy>00020102-001</Cell>
      </Row>
      <Row $h={40}>
        <RowHead scope="row">4</RowHead>
        <Cell rowSpan={24} $last $line={PALE} />
        <Cell colSpan={5}>{"单位(子单位)\n工程名称"}</Cell>
        <Cell colSpan={13} $f="peach" />
        <Cell colSpan={6}>{"分部(子分部)\n工程名称"}</Cell>
        <Cell colSpan={13} $f="white" $last>开槽施工管道主体结构(钢管)</Cell>
        <Cell rowSpan={24} $right={PALE} $line={PALE} />
      </Row>
      <Row $h={40}>
        <RowHead scope="row">5</RowHead>
        <Cell colSpan={5} rowSpan={2}>分项工程名称</Cell>
        <Cell colSpan={13} rowSpan={2} $f="white">钢管接口安装</Cell>
        <Cell colSpan={6}>检验批部位</Cell>
        <Cell colSpan={13} $f="peach" $last>1</Cell>
      </Row>
      <Row $h={40}>
        <RowHead scope="row" $bold>6</RowHead>
        <Cell colSpan={6}>检验批容量</Cell>
        <Cell colSpan={13} $f="white" $last $flush>
          <Active>
            <ActiveText>{mix("钢管:20根、焊缝19条\n钢管道:120m、对口19个")}</ActiveText>
            <PickButton>选</PickButton>
          </Active>
        </Cell>
      </Row>
      <Row $h={40}>
        <RowHead scope="row">7</RowHead>
        <Cell colSpan={5} rowSpan={2}>施工单位</Cell>
        <Cell colSpan={13} rowSpan={2} $f="peach" />
        <Cell colSpan={6}>项目负责人</Cell>
        <Cell colSpan={13} $f="peach" $last />
      </Row>
      <Row $h={40}>
        <RowHead scope="row">8</RowHead>
        <Cell colSpan={6}>项目技术负责人</Cell>
        <Cell colSpan={13} $f="peach" $last />
      </Row>
      <Row $h={40}>
        <RowHead scope="row">9</RowHead>
        <Cell colSpan={5}>分包单位</Cell>
        <Cell colSpan={13} $f="peach" />
        <Cell colSpan={6}>{"分包单位\n项目负责人"}</Cell>
        <Cell colSpan={13} $f="peach" $last />
      </Row>
      <Row $h={40}>
        <RowHead scope="row">10</RowHead>
        <Cell colSpan={5}>{"施工执行标准名\n称及编号"}</Cell>
        <Cell colSpan={32} $f="peach" $last>市政给水管道工程施工质量验收标准DB13(J)/T 8056-2019</Cell>
      </Row>
      <Row $h={40}>
        <RowHead scope="row">11</RowHead>
        <Cell colSpan={12}>验收项目</Cell>
        <Cell colSpan={4}>{"设计要求及\n标准规定"}</Cell>
        <Cell colSpan={5}>{"合格数/实际\n抽样数量"}</Cell>
        <Cell colSpan={10} />
        <Cell colSpan={6} $last />
      </Row>
      {MAIN.map((it, i) => (
        <ItemRow key={it.n} it={it} group="main" first={i === 0} count={MAIN.length} />
      ))}
      {GENERAL.map((it, i) => (
        <ItemRow key={it.n} it={it} group="general" first={i === 0} count={GENERAL.length} />
      ))}
      <EdgeRow label="28" />
    </tbody>
  </Sheet>
);

/* ---------- dialog ---------- */

const Dialog = styled.div`
  position: absolute;
  top: 467px;
  left: 949px;
  display: flex;
  flex-direction: column;
  width: 664px;
  height: 509px;
  border: 3px solid #6c6c3c;
  border-top: 1px solid #6c6c3c;
  border-radius: 5px 5px 0 0;
  background: #ececec;
  box-shadow: inset 1px 0 #fff, inset -1px -1px #a8a8a8;
`;
const DialogTitle = styled.div`
  display: flex;
  align-items: center;
  gap: 2px;
  height: 27px;
  padding: 0 1px 0 8px;
  color: #fff;
  background: linear-gradient(#b0a840, #988c1c 30%, #8c8014 70%, #74701c);
  border-bottom: 1px solid #54501c;
`;
const DialogName = styled.h2`
  flex: 1;
  margin: 0;
  font-size: 12px;
  font-weight: 400;
`;
const Ornament = styled.svg`
  width: 88px;
  height: 26px;
`;
const RoundButton = styled.button`
  display: flex;
  align-items: center;
  justify-content: center;
  width: 21px;
  height: 21px;
  padding: 0;
  border: 2px solid #901808;
  border-radius: 50%;
  background: radial-gradient(circle at 50% 35%, #fff080, #ffb810 70%, #e88800);
`;
const DialogBody = styled.div`
  display: flex;
  flex-direction: column;
  flex: 1;
  padding: 7px 26px 10px 23px;
`;
const Group = styled.fieldset`
  min-width: 0;
  height: 150px;
  margin: 0 1px;
  padding: 0;
  border: 1px solid #a8a494;
  border-radius: 3px;
`;
const Legend = styled.legend`
  margin-left: 4px;
  padding: 0;
  height: 16px;
  line-height: 16px;
`;
const GridBox = styled.div`
  height: 133px;
  border: 1px solid #868690;
  background: #fff;
  overflow: hidden;
`;
const Grid = styled.table`
  table-layout: fixed;
  width: 100%;
  border-collapse: separate;
  border-spacing: 0;
  line-height: 14px;
`;
const GridHead = styled.th`
  height: 15px;
  padding: 0;
  font-weight: 400;
  border-right: 1px solid #e8e8e8;
`;
const GridCell = styled.td<{ $sel?: boolean; $edit?: boolean }>`
  height: 18px;
  padding: 0 1px;
  border: solid #a0a0a0;
  border-width: 0 1px 1px 0;
  color: ${(p) => (p.$sel ? "#fff" : "#000")};
  background: ${(p) => (p.$sel ? "#0078d7" : "#fff")};
  outline: ${(p) => (p.$sel ? "1px dotted #f08828" : p.$edit ? "1px dotted #000" : "none")};
  outline-offset: -1px;
`;
const Marker = styled.td`
  padding: 0;
  border: solid #a0a0a0;
  border-width: 0 1px 1px 0;
  background: #f0f0f0;
`;
const Pointer = styled.span`
  display: block;
  width: 0;
  margin-left: 5px;
  border: solid transparent;
  border-width: 5px 0 5px 5px;
  border-left-color: #000;
`;
const NoteLabel = styled.label`
  margin: 10px 0 8px 2px;
  line-height: 18px;
`;
const Note = styled.textarea`
  display: block;
  flex: 1;
  width: 100%;
  resize: none;
  border: 2px solid #808080;
  border-color: #808080 #707070 #707070 #707070;
  background: #ececec;
  box-shadow: inset -1px -1px #fff;
  outline: 0;
`;
const DialogFoot = styled.div`
  display: flex;
  align-items: center;
  justify-content: flex-end;
  gap: 103px;
  height: 42px;
  padding: 0 63px 3px 0;
  border-top: 1px solid #a0a0a0;
  box-shadow: inset 0 1px #fff;
`;
const PushButton = styled.button`
  display: flex;
  align-items: center;
  justify-content: flex-end;
  width: 73px;
  height: 23px;
  padding: 0;
  border: 1px solid #606060;
  border-radius: 3px;
  background: linear-gradient(#fff, #e4e4e4);
  font-feature-settings: "hwid";
  line-height: 20px;
`;

const GRID_ROWS = [
  ["钢管", "20", "根、焊缝19条"],
  ["焊缝", "0", "条"],
  ["钢管道", "120", "m、对口19个"],
  ["对口", "0", "个"],
];

const Curl = () => (
  <svg width="15" height="21" viewBox="2 0 15 21" fill="none" aria-hidden="true">
    <path d="M1 3c0 5 6 6 6 2 0-3-4-2-3 0M6 0c2 3 8 2 9-1M15 6c-4-3-7 2-4 4 4 2 6 8 1 8-3 0-3-3-1-4M12 6c4 2 3 8 3 12" stroke="#c4c4c4" strokeWidth="2" />
  </svg>
);

const CapacityDialog = () => (
  <Dialog role="dialog" aria-label="检验批容量">
    <DialogTitle>
      <DialogName>检验批容量</DialogName>
      <Ornament viewBox="0 0 88 26" fill="none" aria-hidden="true">
        <path
          d="M0 3c8 4 14-2 22 2 6 3 12 0 18 2M10 8c8-4 14-4 24-2M42 2c-6 6-6 18 4 18 10 0 10-14 2-14-6 0-7 8-2 9M52 0c0 6 8 8 9 2M62 26c-6-8 0-16 6-14 6 3 2 9-2 8M72 2c8 2 14 8 8 16-4 4-8 4-8 8M80 4c4 8 6 12 8 14"
          stroke="#5c5810"
          strokeOpacity=".5"
          strokeWidth="3"
        />
      </Ornament>
      <RoundButton aria-label="最大化">
        <svg width="9" height="9" viewBox="0 0 9 9" fill="none"><path d="M1 1.500h7v6.500h-7zM1 2.500h7" stroke="#601808" strokeWidth="1.500" /></svg>
      </RoundButton>
      <RoundButton aria-label="关闭">
        <svg width="9" height="9" viewBox="0 0 9 9" fill="none"><path d="M1 1l7 7M8 1l-7 7" stroke="#601808" strokeWidth="2.500" /></svg>
      </RoundButton>
    </DialogTitle>
    <DialogBody>
      <Group>
        <Legend>检验批容量</Legend>
        <GridBox>
          <Grid>
            <colgroup>
              <col style={{ width: 15 }} />
              <col />
              <col style={{ width: 185 }} />
              <col style={{ width: 138 }} />
            </colgroup>
            <thead>
              <tr>
                <GridHead />
                <GridHead scope="col">检查项目</GridHead>
                <GridHead scope="col">容量</GridHead>
                <GridHead scope="col">单位</GridHead>
              </tr>
            </thead>
            <tbody>
              {GRID_ROWS.map(([name, qty, unit], i) => (
                <tr key={name}>
                  <Marker>{i === 0 && <Pointer />}</Marker>
                  <GridCell $sel={i === 0}>{name}</GridCell>
                  <GridCell $edit={i === 0}>{mix(qty)}</GridCell>
                  <GridCell $sel={i === 0}>{mix(unit)}</GridCell>
                </tr>
              ))}
            </tbody>
          </Grid>
        </GridBox>
      </Group>
      <NoteLabel htmlFor="note">{mix("条文说明:")}</NoteLabel>
      <Note id="note" readOnly />
    </DialogBody>
    <DialogFoot>
      <PushButton>确定(<u>O</u>)<Curl /></PushButton>
      <PushButton>取消(<u>C</u>)<Curl /></PushButton>
    </DialogFoot>
  </Dialog>
);

/* ---------- assembly ---------- */

const MENUS: [string, string][] = [
  ["工程", "P"], ["文件", "F"], ["编辑", "E"], ["视图", "V"], ["格式", "M"], ["资料上报", "D"], ["评定", "A"],
  ["系统维护", "S"], ["资料库", "L"], ["技术工艺", "J"], ["窗口", "W"], ["工具", "T"], ["帮助", "H"],
];
// "|" is a separator, "v" a drop-down arrow
const MAIN_TOOLS: (string | [string, string, number])[] = [
  ["new", "新建", 47], ["open", "打开", 47], ["save", "保存", 47], "|", ["docs", "附件", 47], ["info", "信息", 47],
  "v", "|", ["print", "打印", 47], "v", ["preview", "预览", 47], "|", ["expand", "展开/收起", 62], "v",
  ["find", "查找", 47], ["replace", "替换", 47], "|", ["ie", "在线找专家", 70], ["sales", "销售咨询", 59],
  ["service", "售后服务", 59], ["classroom", "在线课堂", 59], ["tips", "技巧集锦", 59], "|", ["pay", "我要付款", 59],
  "|", ["login", "账号登录", 64], "|", ["update", "检查更新", 59], "|", ["exit", "退出", 47],
];

const IconTool = ({ name, w, on }: { name: string; w?: number; on?: boolean }) => (
  <Tool $w={w} $on={on} aria-label={name}><Icon name={name} /></Tool>
);

const App = () => (
  <>
    <GlobalStyle />
    <Shell>
      <TitleBar>
        <Icon name="app" size={14} />
        <TitleText>筑业资料河北版 - [D:\筑业建筑系列软件\河北省工程资料软件\工程\1.zyzl]</TitleText>
      </TitleBar>
      <MenuBar>
        {MENUS.map(([t, k]) => (
          <MenuItem key={k}>{t}(<u>{k}</u>)</MenuItem>
        ))}
      </MenuBar>
      <MainBar>
        <Rule />
        {MAIN_TOOLS.map((t, i) =>
          t === "|" ? (
            <Rule key={i} $gap={4} />
          ) : typeof t === "string" ? (
            <Drop key={i} $w={17} aria-label="更多" />
          ) : (
            <MainButton key={i} $w={t[2]}>
              <Icon name={t[0]} />
              {t[1]}
            </MainButton>
          ),
        )}
      </MainBar>
      <Workspace>
        <LeftPanel>
          <Tabs>
            <Tab $on>表格目录</Tab>
            <Tab>回收站</Tab>
            <Tab>查找结果</Tab>
          </Tabs>
          <Page>
            <TreeBar>
              {["left", "up", "down", "right"].map((n) => <IconTool key={n} name={n} w={23} />)}
              <Rule $gap={1} />
              {["add", "docsPale", "remove"].map((n) => <IconTool key={n} name={n} w={23} />)}
              <Rule $gap={1} />
              <IconTool name="filter" w={26} />
            </TreeBar>
            <TreeSelect>
              <PlainSelect aria-label="资料系统"><option>河北省市政工程资料管理系统（2019）</option></PlainSelect>
              <OrangeArrow>
                <svg width="7" height="5" viewBox="0 0 7 5" fill="none"><path d="M1 1l2.500 2L6 1" stroke="#402000" strokeWidth="1.500" /></svg>
              </OrangeArrow>
            </TreeSelect>
            <Tree role="tree">
              {TREE.map((_, i) => <TreeNode key={i} i={i} />)}
            </Tree>
            <HandleRow>
              <Handle aria-label="收起范例">
                <svg width="8" height="6" viewBox="0 0 8 6" fill="none"><path d="M1 1l3 3 3-3" stroke="#000" strokeWidth="1.500" /></svg>
              </Handle>
            </HandleRow>
            <Example>范　　　　例</Example>
          </Page>
        </LeftPanel>
        <Splitter>
          <Handle $vertical aria-label="收起目录">
            <svg width="5" height="8" viewBox="0 0 5 8" fill="none"><path d="M4 1L1 4l3 3" stroke="#000" strokeWidth="1.500" /></svg>
          </Handle>
        </Splitter>
        <Editor>
          <Bars>
            <Bar>
              <Grip />
              <IconTool name="docs" /><IconTool name="cut" /><IconTool name="paste" />
              <Rule />
              <IconTool name="undo" /><IconTool name="redo" />
              <Rule />
              <Combo $w={92}>
                <Sign $bold>&nbsp;T</Sign><Sign $bold $size={12}>T</Sign>
                <PlainSelect aria-label="字体"><option>宋体</option></PlainSelect>
                <ComboArrow />
              </Combo>
              <Rule />
              <Combo $w={60}>
                <PlainSelect $half aria-label="字号"><option>10</option></PlainSelect>
                <ComboArrow />
              </Combo>
              <IconTool name="format" />
              <Tool><Sign $bold $size={15}>B</Sign></Tool>
              <Tool><Sign $bold $italic $size={15}>I</Sign></Tool>
              <Tool><Sign $bold $size={15}><u>U</u></Sign></Tool>
              <IconTool name="bucket" />
              <Tool><Sign $bold $under="#f00000">A</Sign></Tool>
              <Rule />
              <IconTool name="plus" /><IconTool name="minus" />
              <Rule $gap={2} />
              <Tool $w={30}><Sign $italic $bold $c="#303858">b²</Sign></Tool>
              <Rule $gap={2} />
              <Tool $w={30}><Ring>1/a</Ring></Tool>
              <Rule $gap={1} />
              <IconTool name="wrap" on /><IconTool name="alignLeft" /><IconTool name="alignCenter" on />
              <IconTool name="alignRight" /><IconTool name="alignFill" />
              <Rule $gap={3} />
              <IconTool name="vTop" /><IconTool name="vMid" on /><IconTool name="vBottom" />
            </Bar>
            <Bar>
              <Grip />
              {["insRow", "insCol", "moveRow", "splitUp", "colArrow", "splitDown", "mergeOff", "merge", "lock"].map((n) => (
                <IconTool key={n} name={n} w={25} />
              ))}
              <Rule />
              {["spacing", "spacingOff", "abcOff"].map((n) => <IconTool key={n} name={n} w={25} />)}
              <Rule />
              <IconTool name="image" w={24} /><Drop aria-label="插入图片" />
              <Rule />
              <IconTool name="calc" w={25} />
              <Tool $w={24}><Sign $bold $size={15}>Σ</Sign></Tool><Drop $w={19} aria-label="函数" />
              <Rule $gap={2} />
              <Combo $w={67}>
                <PlainSelect $half aria-label="缩放"><option>100%</option></PlainSelect>
                <ComboArrow />
              </Combo>
              <Rule />
              <Combo $w={80}>
                <svg width="60" height="2" aria-hidden="true"><path d="M6 1h53" stroke="#000" /></svg>
                <ComboArrow />
              </Combo>
              <IconTool name="boxSlash" w={24} /><Drop aria-label="边框" />
              <IconTool name="boxSlashPale" w={24} /><Drop aria-label="斜线" />
            </Bar>
            <Bar>
              <Grip />
              <Tool $w={5} aria-hidden="true" />
              <TextTool $gap={10}><Icon name="phi" />特殊符号</TextTool>
              <TextTool $gap={9}><Sign $size={12}>NO</Sign>重新编号</TextTool>
              <TextTool $gap={0}><Strike>D</Strike>画删除线</TextTool>
              <Drop $w={28} aria-label="删除线" />
              <TextTool $gap={10}><Sign $bold $size={15} $c="#e00808">项</Sign>分部分项</TextTool>
              <TextTool $gap={3}><Icon name="info" />原始记录</TextTool>
              <Drop $w={28} aria-label="原始记录" />
              <TextTool $gap={3}><Sign $bold $size={15} $c="#e00808">验</Sign>报验表</TextTool>
              <Drop $w={26} aria-label="报验表" />
              <TextTool><Icon name="check" />{"  评定"}</TextTool>
            </Bar>
          </Bars>
          <SheetArea>
            <SheetGrid />
          </SheetArea>
        </Editor>
      </Workspace>
      <CapacityDialog />
    </Shell>
  </>
);

export default App;
